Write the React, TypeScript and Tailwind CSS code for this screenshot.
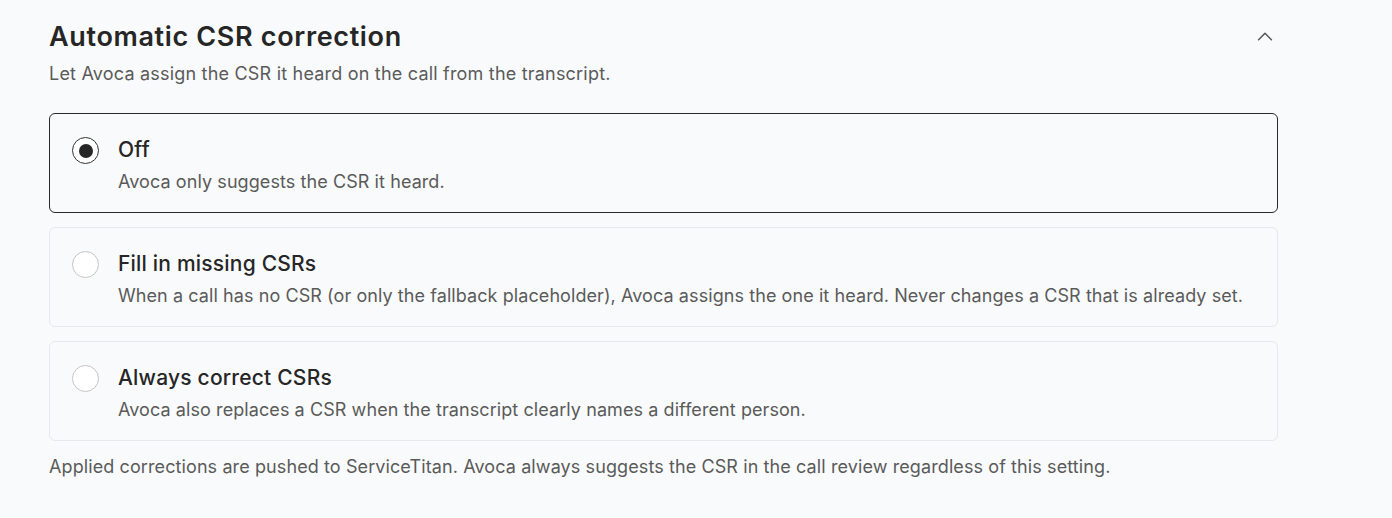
import React, { useState } from "react";

const options = [
  { id: "off", label: "Off", desc: "Avoca only suggests the CSR it heard." },
  {
    id: "fill",
    label: "Fill in missing CSRs",
    desc: "When a call has no CSR (or only the fallback placeholder), Avoca assigns the one it heard. Never changes a CSR that is already set.",
  },
  {
    id: "always",
    label: "Always correct CSRs",
    desc: "Avoca also replaces a CSR when the transcript clearly names a different person.",
  },
];

export default function App() {
  const [value, setValue] = useState("off");
  return (
    <div
      className="min-h-[518px] w-full bg-[#f9fafb] text-[#222]"
      style={{ fontFamily: "Inter, 'Noto Sans', sans-serif" }}
    >
      <div className="w-[1229px] ml-[49px] pt-[19px]">
        <div className="flex items-center justify-between">
          <h2 className="text-[27px] leading-[36px] font-semibold tracking-[0.65px] text-[#262626]">
            Automatic CSR correction
          </h2>
          <svg width="22" height="22" viewBox="0 0 24 24" fill="none" stroke="#555" strokeWidth="1.6" strokeLinecap="round" strokeLinejoin="round" className="mr-[2px]">
            <path d="M5 15l7-7 7 7" />
          </svg>
        </div>
        <p className="mt-[6px] text-[18px] leading-[26px] tracking-[0.2px] text-[#5a5a5a]">
          Let Avoca assign the CSR it heard on the call from the transcript.
        </p>
        <div className="mt-[26px] flex flex-col gap-[14px]">
          {options.map((o) => {
            const sel = value === o.id;
            return (
              <button
                key={o.id}
                onClick={() => setValue(o.id)}
                className={`flex h-[100px] items-start gap-[19px] rounded-[6px] border bg-[#f9fafb] pl-[22px] pt-[22px] text-left ${
                  sel ? "border-[#2a2a2a]" : "border-[#e6e8ec]"
                }`}
              >
                <span
                  className={`mt-[1px] flex h-[27px] w-[27px] shrink-0 items-center justify-center rounded-full border ${
                    sel ? "border-[#333]" : "border-[#c4c4c4]"
                  } bg-white`}
                >
                  {sel && <span className="h-[14px] w-[14px] rounded-full bg-[#262626]" />}
                </span>
                <span className="flex flex-col">
                  <span className="text-[21px] leading-[28px] font-medium tracking-[0.2px] text-[#262626]">{o.label}</span>
                  <span className="mt-[6px] text-[18px] leading-[24px] tracking-[0.08px] text-[#5a5a5a]">{o.desc}</span>
                </span>
              </button>
            );
          })}
        </div>
        <p className="mt-[13px] text-[18px] leading-[26px] tracking-[0.1px] text-[#5a5a5a]">
          Applied corrections are pushed to ServiceTitan. Avoca always suggests the CSR in the call review regardless of this setting.
        </p>
      </div>
    </div>
  );
}
